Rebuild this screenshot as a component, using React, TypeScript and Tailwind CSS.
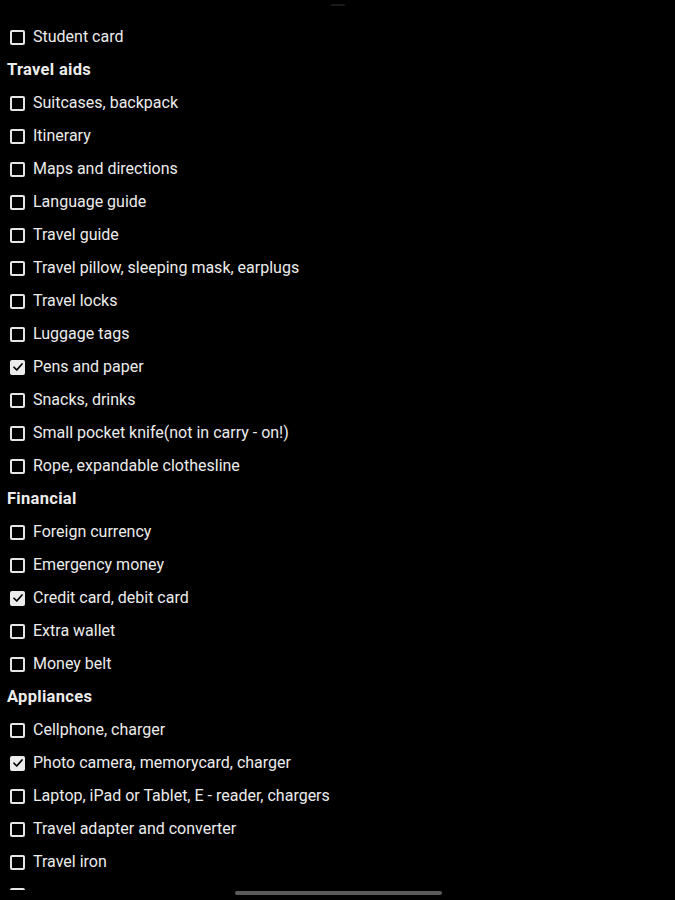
import { Fragment } from 'react'

type Row = { label: string; checked?: boolean; header?: boolean }

const rows: Row[] = [
  { label: 'Student card' },
  { label: 'Travel aids', header: true },
  { label: 'Suitcases, backpack' },
  { label: 'Itinerary' },
  { label: 'Maps and directions' },
  { label: 'Language guide' },
  { label: 'Travel guide' },
  { label: 'Travel pillow, sleeping mask, earplugs' },
  { label: 'Travel locks' },
  { label: 'Luggage tags' },
  { label: 'Pens and paper', checked: true },
  { label: 'Snacks, drinks' },
  { label: 'Small pocket knife(not in carry - on!)' },
  { label: 'Rope, expandable clothesline' },
  { label: 'Financial', header: true },
  { label: 'Foreign currency' },
  { label: 'Emergency money' },
  { label: 'Credit card, debit card', checked: true },
  { label: 'Extra wallet' },
  { label: 'Money belt' },
  { label: 'Appliances', header: true },
  { label: 'Cellphone, charger' },
  { label: 'Photo camera, memorycard, charger', checked: true },
  { label: 'Laptop, iPad or Tablet, E - reader, chargers' },
  { label: 'Travel adapter and converter' },
  { label: 'Travel iron' },
  { label: '' },
]

function Box({ checked }: { checked?: boolean }) {
  if (checked) {
    return (
      <span className="w-[15px] h-[15px] rounded-[2px] bg-[#ececec] flex items-center justify-center shrink-0">
        <svg width="12" height="12" viewBox="0 0 24 24" fill="none" stroke="black" strokeWidth="3.5" strokeLinecap="round" strokeLinejoin="round">
          <polyline points="4 12.5 9.5 18 20 6" />
        </svg>
      </span>
    )
  }
  return <span className="w-[15px] h-[15px] rounded-[2px] border-2 border-[#e6e6e6] shrink-0" />
}

export default function App() {
  return (
    <div className="relative w-[675px] h-[900px] bg-black overflow-hidden text-[#ececec]" style={{ fontFamily: 'Roboto, "Liberation Sans", sans-serif' }}>
      <div className="absolute top-[4px] left-1/2 -translate-x-1/2 w-[14px] h-[2px] rounded bg-[#1a1a1a]" />
      <div className="h-[890px] overflow-hidden pt-[20.5px] flex flex-col">
        {rows.map((r, i) => (
          <Fragment key={i}>
            {r.header ? (
              <div className="h-[33px] shrink-0 flex items-center pl-[7px] text-[16.5px] font-bold tracking-[0.3px]">{r.label}</div>
            ) : (
              <div className="h-[33px] shrink-0 flex items-center pl-[10px] gap-[8px]">
                <Box checked={r.checked} />
                {r.label && <span className="text-[16px]">{r.label}</span>}
              </div>
            )}
          </Fragment>
        ))}
      </div>
      <div className="absolute bottom-[5px] left-[235px] w-[207px] h-[4px] rounded-full bg-[#5a5a5a]" />
    </div>
  )
}
